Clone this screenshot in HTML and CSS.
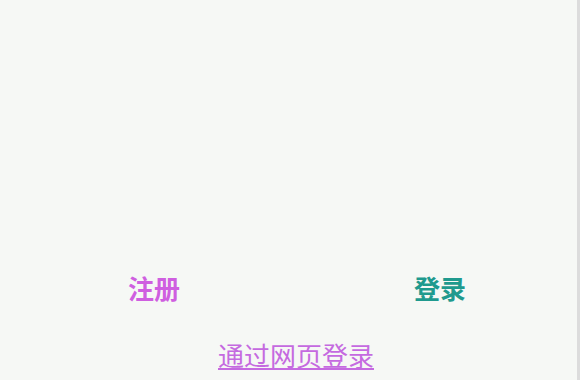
FILE: index.html
```html
<!DOCTYPE html>
<html lang="zh">
<head>
<meta charset="utf-8">
<link rel="stylesheet" href="styles.css">
</head>
<body>
<div class="screen">
  <div class="actions">
    <a class="btn register">注册</a>
    <a class="btn login">登录</a>
  </div>
  <div class="web">
    <a class="web-link">通过网页登录</a>
  </div>
</div>
</body>
</html>
```
FILE: styles.css
```css
html, body {
  margin: 0;
  padding: 0;
  height: 100%;
  background: #f6f8f5;
}
.screen {
  box-sizing: border-box;
  width: 580px;
  height: 380px;
  border-right: 3px solid #dcdcdc;
  display: flex;
  flex-direction: column;
  justify-content: flex-end;
  font-family: "Noto Sans CJK SC", "Noto Sans", sans-serif;
}
.actions {
  display: flex;
  justify-content: space-between;
  padding: 0 111px 0 128px;
}
.btn {
  font-size: 26px;
  line-height: 30px;
  font-weight: bold;
}
.register { color: #cf5fe0; }
.login { color: #1f9a8e; }
.web {
  display: flex;
  justify-content: center;
  padding: 37px 0 10px 0;
}
.web-link {
  font-size: 26px;
  line-height: 30px;
  color: #c56ae0;
  text-decoration: underline;
  margin-left: 15px;
}
```
